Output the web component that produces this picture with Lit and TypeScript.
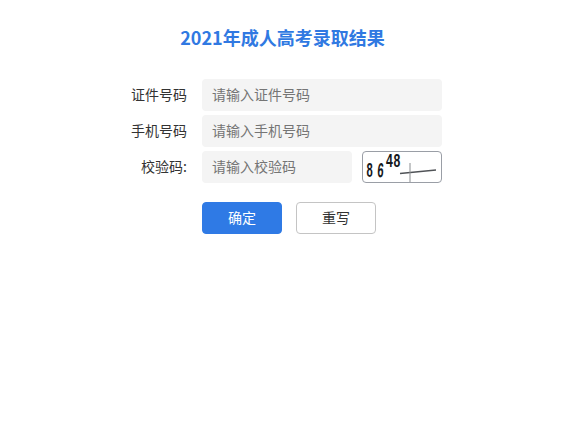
import { LitElement, html, css } from "lit";
import { customElement } from "lit/decorators.js";

@customElement("app-root")
export class AppRoot extends LitElement {
  static styles = css`
    :host {
      display: block;
      width: 579px;
      height: 427px;
      background: #fff;
      font-family: "Noto Sans CJK SC", "Liberation Sans", sans-serif;
      font-size: 14px;
      color: #333;
      overflow: hidden;
    }
    .title {
      margin: 0;
      box-sizing: border-box;
      height: 79px;
      padding: 24px 14px 0 0;
      text-align: center;
      font-size: 18px;
      line-height: 27px;
      font-weight: 700;
      color: #3079e2;
    }
    .form {
      display: grid;
      grid-template-columns: 187px 240px;
      column-gap: 15px;
      row-gap: 4px;
    }
    .label {
      text-align: right;
      line-height: 30px;
      height: 32px;
    }
    .field {
      height: 32px;
      box-sizing: border-box;
      padding-left: 10px;
      background: #f4f4f4;
      border-radius: 4px;
      line-height: 30px;
      color: #757575;
    }
    .captcha-row {
      display: flex;
      gap: 10px;
    }
    .captcha-row .field {
      width: 150px;
    }
    .captcha {
      width: 80px;
      height: 32px;
      box-sizing: border-box;
      border: 1px solid #9a9ea6;
      border-radius: 4px;
      background: #fff;
      overflow: hidden;
    }
    .captcha svg {
      display: block;
    }
    .captcha text {
      font-family: "Liberation Sans", sans-serif;
      font-size: 17px;
      font-weight: 700;
      fill: #16181c;
    }
    .actions {
      display: flex;
      gap: 14px;
      grid-column: 2;
      margin-top: 15px;
    }
    .btn {
      width: 80px;
      height: 32px;
      box-sizing: border-box;
      border-radius: 4px;
      text-align: center;
      line-height: 29px;
      border: 1px solid #c4c4c4;
      background: #fff;
      color: #333;
    }
    .primary {
      background: #2f7ae5;
      border-color: #2f7ae5;
      color: #fff;
    }
  `;

  render() {
    return html`
      <h1 class="title">2021年成人高考录取结果</h1>
      <div class="form">
        <div class="label">证件号码</div>
        <div class="field">请输入证件号码</div>
        <div class="label">手机号码</div>
        <div class="field">请输入手机号码</div>
        <div class="label">校验码:</div>
        <div class="captcha-row">
          <div class="field">请输入校验码</div>
          <div class="captcha">
            <svg width="78" height="30" viewBox="0 0 78 30">
              <text transform="translate(3.5 25) scale(.66 1.2)">8</text>
              <text transform="translate(14 25) rotate(4) scale(.66 1.2)">6</text>
              <text transform="translate(23 15) scale(.72 1.05)">4</text>
              <text transform="translate(30.5 15) scale(.72 1.05)">8</text>
              <path d="M37 21.5L73 18" stroke="#505357" stroke-width="1.3" fill="none" />
              <path d="M47 11V30" stroke="#8a8d90" stroke-width="1" fill="none" />
            </svg>
          </div>
        </div>
        <div class="actions">
          <div class="btn primary">确定</div>
          <div class="btn">重写</div>
        </div>
      </div>
    `;
  }
}
